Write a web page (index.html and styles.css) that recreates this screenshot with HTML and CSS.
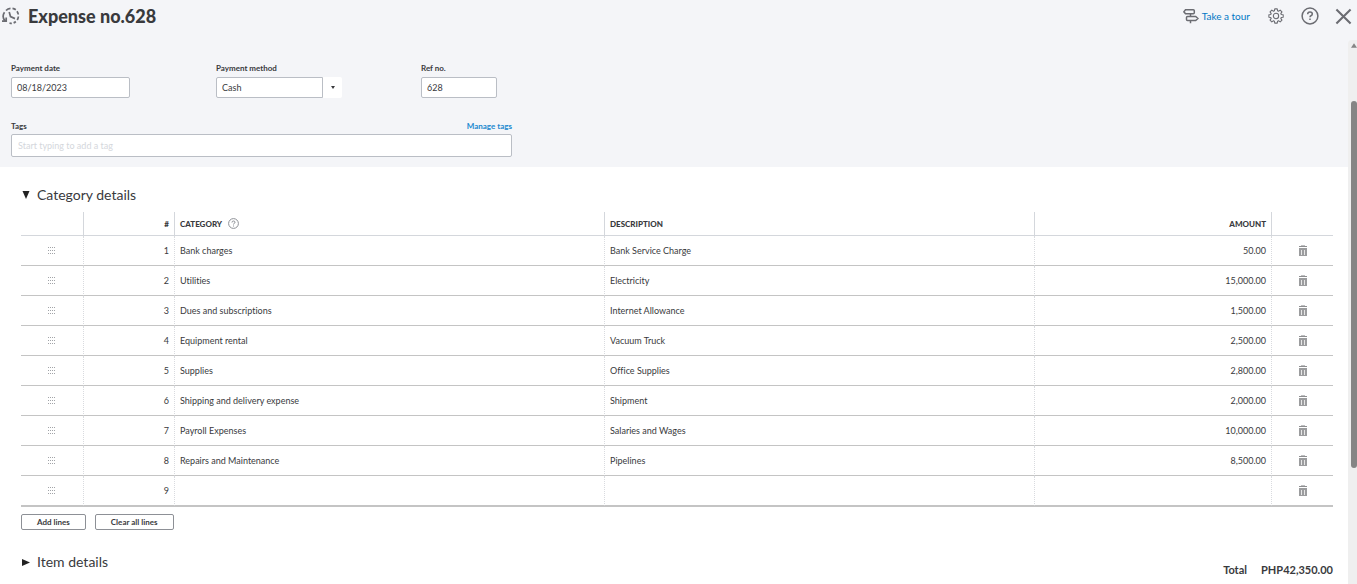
FILE: index.html
```
<!DOCTYPE html>
<html lang="en">
<head>
<meta charset="utf-8">
<title>Expense no.628</title>
<link rel="stylesheet" href="styles.css">
</head>
<body>
<svg class="sprite" aria-hidden="true">
  <symbol id="grip" viewBox="0 0 7 7"><path d="M0 .5h7M0 3.5h7M0 6.5h7" stroke="#a2a4a8" stroke-dasharray="1 1"/></symbol>
  <symbol id="trash" viewBox="0 0 8 12"><path d="M2 .5h4" stroke="#c0c0c2"/><path d="M0 1.500h8" stroke="#8d8e90"/><path d="M0 3h8v8H0z" fill="#9b9c9e"/><path d="M2.500 5v5M5.500 5v5" stroke="#e6e6e6"/></symbol>
</svg>
<header class="topbar">
  <svg class="history" viewBox="0 0 18 18" fill="none" stroke="#6b6c72" stroke-width="1.700">
    <path d="M3 14A7.400 7.400 0 0 1 2.500 5.200M4 3.500A7.400 7.400 0 0 1 8.500 1.300M10.500 1.400A7.400 7.400 0 0 1 13.800 2.800M15 4.200A7.400 7.400 0 0 1 16.300 7.500M16.400 9.500A7.400 7.400 0 0 1 15.200 13M13.800 14.500A7.400 7.400 0 0 1 11.600 15.900M9.800 16.300A7.400 7.400 0 0 1 7.500 16.200M0 14.200h4.200V10.500M7.200 5l1.300 4.600 4.500 2"/>
  </svg>
  <h1>Expense no.628</h1>
  <a class="tour" href="#tour">
    <svg viewBox="0 0 16 16" fill="none" stroke="#6b6c72" stroke-width="1.500"><path d="M2.500 1.700h7.800q1 0 1 1v2.100q0 1-1 1H2.500L.9 3.800zM4.500 8.500h8.200l2.300 2-2.300 2H4.500q-1 0-1-1v-2q0-1 1-1zM7.500 5.800v2.700M7.500 12.500v2.700"/></svg>
    <span>Take a tour</span>
  </a>
  <button class="tool gear" aria-label="Settings">
    <svg viewBox="0 0 18 18" fill="none" stroke="#6b6c72" stroke-width="1.200" stroke-linejoin="round"><circle cx="9" cy="9" r="3"/><path d="M7.600 1h2.800l.4 2.200 1 .5 1.900-1.300 2 2-1.300 1.900.5 1 2.200.4v2.600l-2.200.4-.5 1 1.300 1.900-2 2-1.900-1.300-1 .5-.4 2.200H7.600l-.4-2.200-1-.5-1.900 1.300-2-2 1.300-1.900-.5-1L1 10.300V7.700l2.100-.4.5-1-1.300-1.900 2-2 1.900 1.300 1-.5z"/></svg>
  </button>
  <button class="tool help" aria-label="Help">
    <svg viewBox="0 0 18 18" fill="none" stroke="#6b6c72" stroke-width="1.500"><circle cx="9" cy="9" r="7.900"/><path d="M6.700 7.300q0-2.200 2.300-2.200t2.300 2q0 1.200-1.300 1.700-1 .4-1 1.500M9 11.500v1.600"/></svg>
  </button>
  <button class="tool close" aria-label="Close">
    <svg viewBox="0 0 18 18" fill="none" stroke="#6b6c72" stroke-width="2.200"><path d="M1.500 1.500l15 15M16.500 1.500l-15 15"/></svg>
  </button>
</header>
<div class="viewport">
  <main>
    <form class="details">
      <div class="fields">
        <div class="field">
          <label for="date">Payment date</label>
          <input id="date" class="date" type="text" value="08/18/2023">
        </div>
        <div class="field">
          <label for="method">Payment method</label>
          <div class="combo">
            <select id="method"><option>Cash</option></select>
            <span class="arrow"><svg viewBox="0 0 4 3"><path d="M0 0h4L2 3z" fill="#393a3d"/></svg></span>
          </div>
        </div>
        <div class="field">
          <label for="ref">Ref no.</label>
          <input id="ref" class="ref" type="text" value="628">
        </div>
      </div>
      <div class="tags">
        <div class="tags-head"><label for="tags">Tags</label><a href="#tags">Manage tags</a></div>
        <input id="tags" type="text" placeholder="Start typing to add a tag">
      </div>
    </form>
    <section class="lines">
      <h2><svg viewBox="0 0 8 8"><path d="M.5 0h7L4 8z" fill="#222"/></svg>Category details</h2>
      <table>
        <colgroup><col class="c-grip"><col class="c-num"><col><col><col class="c-amount"><col class="c-del"></colgroup>
        <thead>
          <tr><th></th><th class="right">#</th><th><span class="with-help">CATEGORY <svg viewBox="0 0 11 11" fill="none" stroke="#8d9096"><circle cx="5.500" cy="5.500" r="4.900"/><path d="M4 4.500q0-1.500 1.500-1.500T7 4.300q0 .8-1 1.100-.5.300-.5 1.100M5.500 7.500v1"/></svg></span></th><th>DESCRIPTION</th><th class="right">AMOUNT</th><th></th></tr>
        </thead>
        <tbody>
          <tr><td class="drag"><svg class="grip"><use href="#grip"/></svg></td><td class="right">1</td><td>Bank charges</td><td>Bank Service Charge</td><td class="right">50.00</td><td><button class="del" aria-label="Delete line 1"><svg><use href="#trash"/></svg></button></td></tr>
          <tr><td class="drag"><svg class="grip"><use href="#grip"/></svg></td><td class="right">2</td><td>Utilities</td><td>Electricity</td><td class="right">15,000.00</td><td><button class="del" aria-label="Delete line 2"><svg><use href="#trash"/></svg></button></td></tr>
          <tr><td class="drag"><svg class="grip"><use href="#grip"/></svg></td><td class="right">3</td><td>Dues and subscriptions</td><td>Internet Allowance</td><td class="right">1,500.00</td><td><button class="del" aria-label="Delete line 3"><svg><use href="#trash"/></svg></button></td></tr>
          <tr><td class="drag"><svg class="grip"><use href="#grip"/></svg></td><td class="right">4</td><td>Equipment rental</td><td>Vacuum Truck</td><td class="right">2,500.00</td><td><button class="del" aria-label="Delete line 4"><svg><use href="#trash"/></svg></button></td></tr>
          <tr><td class="drag"><svg class="grip"><use href="#grip"/></svg></td><td class="right">5</td><td>Supplies</td><td>Office Supplies</td><td class="right">2,800.00</td><td><button class="del" aria-label="Delete line 5"><svg><use href="#trash"/></svg></button></td></tr>
          <tr><td class="drag"><svg class="grip"><use href="#grip"/></svg></td><td class="right">6</td><td>Shipping and delivery expense</td><td>Shipment</td><td class="right">2,000.00</td><td><button class="del" aria-label="Delete line 6"><svg><use href="#trash"/></svg></button></td></tr>
          <tr><td class="drag"><svg class="grip"><use href="#grip"/></svg></td><td class="right">7</td><td>Payroll Expenses</td><td>Salaries and Wages</td><td class="right">10,000.00</td><td><button class="del" aria-label="Delete line 7"><svg><use href="#trash"/></svg></button></td></tr>
          <tr><td class="drag"><svg class="grip"><use href="#grip"/></svg></td><td class="right">8</td><td>Repairs and Maintenance</td><td>Pipelines</td><td class="right">8,500.00</td><td><button class="del" aria-label="Delete line 8"><svg><use href="#trash"/></svg></button></td></tr>
          <tr><td class="drag"><svg class="grip"><use href="#grip"/></svg></td><td class="right">9</td><td></td><td></td><td></td><td><button class="del" aria-label="Delete line 9"><svg><use href="#trash"/></svg></button></td></tr>
        </tbody>
      </table>
      <div class="actions"><button>Add lines</button><button>Clear all lines</button></div>
      <div class="bottom">
        <h2><svg viewBox="0 0 8 8"><path d="M0 1v7l8-3.500z" fill="#222"/></svg>Item details</h2>
        <p class="total"><span>Total</span><span>PHP42,350.00</span></p>
      </div>
    </section>
  </main>
  <div class="scrollbar" aria-hidden="true">
    <svg viewBox="0 0 7 5"><path d="M0 5l3.500-5L7 5z" fill="#858585"/></svg>
    <div class="thumb"></div>
  </div>
</div>
</body>
</html>
```
FILE: styles.css
```
* { box-sizing: border-box; }
body {
  margin: 0;
  height: 100vh;
  overflow: hidden;
  display: flex;
  flex-direction: column;
  background: #fff;
  color: #393a3d;
  font: 9px/12px Lato, "Liberation Sans", sans-serif;
  font-variant-ligatures: none;
}
svg { display: block; flex: none; }
button, input, select { font: inherit; color: inherit; }
a { color: #0077c5; text-decoration: none; }
h1, h2, p { margin: 0; }
.sprite { position: absolute; width: 0; height: 0; }

.topbar {
  flex: none;
  display: flex;
  align-items: center;
  height: 40px;
  padding: 0 5px 8px 2px;
  background: #f4f5f8;
}
.history { width: 18px; height: 18px; margin-right: 8px; }
h1 { font-size: 18px; line-height: 24px; font-weight: 900; margin-right: auto; }
.tour { display: flex; align-items: center; gap: 3px; margin-right: 18px; font-size: 10px; }
.tour svg { width: 16px; height: 16px; }
.tool { padding: 0; border: 0; background: none; }
.gear svg { width: 16px; height: 16px; margin-right: 17px; }
.help svg { width: 18px; height: 18px; margin-right: 16px; }
.close svg { width: 17px; height: 17px; }

.viewport { flex: 1; min-height: 0; display: flex; background: linear-gradient(#f4f5f8 8px, #fff 8px); }
main { flex: 1; min-width: 0; overflow: hidden; }
.scrollbar {
  flex: none;
  width: 9px;
  padding: 3px 0 0 3px;
  background: #efefef;
  border-top-left-radius: 4px;
}
.scrollbar svg { width: 6px; height: 5px; }
.thumb { height: 367px; margin-top: 53px; border-radius: 3px; background: #858585; }

.details { padding: 22px 11px 10px; background: #f4f5f8; }
.fields { display: flex; }
.field { width: 205px; }
label { display: block; font-size: 8px; font-weight: 700; }
.field label { margin-bottom: 3px; }
input, select {
  display: block;
  height: 21px;
  padding: 0 5px;
  border: 1px solid #babec5;
  border-radius: 2px;
  background: #fff;
}
.date { width: 119px; }
.ref { width: 76px; }
.combo { display: flex; }
select { appearance: none; width: 107px; border-radius: 2px 0 0 2px; }
.arrow { display: flex; align-items: center; justify-content: center; width: 19px; background: #fff; border-radius: 0 2px 2px 0; }
.arrow svg { width: 4px; height: 3px; }
.tags { width: 501px; margin-top: 22px; }
.tags-head { display: flex; justify-content: space-between; margin-bottom: 2px; font-size: 8px; font-weight: 700; }
.tags-head a { color: #2088cf; }
.tags input { width: 100%; height: 23px; padding-left: 6px; }
.tags input::placeholder { color: #d4d7dc; opacity: 1; }

.lines { padding: 18px 15px 0 21px; }
h2 { display: flex; align-items: center; gap: 7px; font-size: 14px; line-height: 20px; font-weight: 400; }
h2 svg { width: 8px; height: 8px; margin-left: 1px; }
table { width: 100%; margin-top: 7px; border-spacing: 0; table-layout: fixed; border-bottom: 1px solid #c4c4c4; }
.c-grip { width: 63px; }
.c-num { width: 91px; }
.c-amount { width: 237px; }
.c-del { width: 61px; }
th, td { padding: 0 5px; text-align: left; }
th { height: 24px; border-right: 1px solid #d4d7dc; border-bottom: 1px solid #d4d7dc; font-weight: 900; font-size: 8px; }
td { height: 30px; border-right: 1px dotted #d9dbdf; border-bottom: 1px solid #c4c4c4; }
th:last-child, td:last-child { border-right: 0; }
.right { text-align: right; }
.with-help { display: flex; align-items: center; gap: 6px; }
.with-help svg { width: 11px; height: 11px; }
.grip { width: 7px; height: 7px; margin: 0 auto; }
.drag { padding: 0 6px 0 5px; }
.del { display: block; margin: 0 auto; padding: 0; border: 0; background: none; }
.del svg { width: 8px; height: 12px; }

.actions { display: flex; gap: 9px; margin-top: 7px; }
.actions button {
  height: 16px;
  padding: 0 15px;
  border: 1px solid #8d9096;
  border-radius: 2px;
  background: #fff;
  font-size: 8px;
  font-weight: 700;
  line-height: 14px;
}
.bottom { display: flex; justify-content: space-between; align-items: flex-start; margin-top: 22px; }
.total { display: flex; gap: 14px; margin-top: 10px; font-size: 11px; line-height: 16px; font-weight: 700; }
```
